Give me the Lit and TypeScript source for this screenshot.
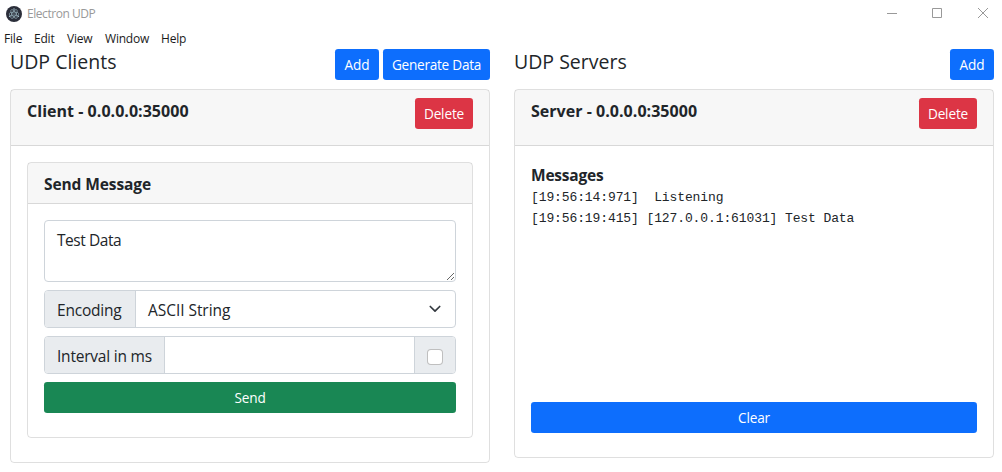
import { LitElement, html, css } from "lit";
import { customElement } from "lit/decorators.js";

@customElement("app-root")
export class AppRoot extends LitElement {
  static styles = css`
    :host {
      display: block;
      height: 472px;
      overflow: hidden;
      background: #fff;
      color: #212529;
      font: 400 15.5px/24px "Open Sans", "Noto Sans", sans-serif;
    }
    * { box-sizing: border-box; }
    span, button, h5, strong { white-space: pre; }
    .titlebar {
      display: flex;
      align-items: center;
      height: 27px;
      padding-left: 6px;
      font-size: 12px;
      line-height: 16px;
      color: #999;
    }
    .logo { width: 16px; height: 16px; margin-right: 5px; }
    .apptitle { flex: 1; letter-spacing: -0.45px; }
    .controls { display: block; width: 138px; height: 27px; }
    .menu {
      display: flex;
      height: 22px;
      padding: 4px 0 0 4px;
      font-size: 12px;
      line-height: 16px;
      color: #1a1a1a;
    }
    .menu span { letter-spacing: -0.2px; }
    .m-file { width: 30px; }
    .m-edit { width: 33px; }
    .m-view { width: 38px; }
    .m-window { width: 56px; }
    .columns {
      display: grid;
      grid-template-columns: 480px 480px;
      column-gap: 24px;
      align-items: start;
      padding-left: 10px;
    }
    .head { display: flex; height: 40px; gap: 4px; }
    h5 {
      flex: 1;
      margin: 0;
      padding-top: 1px;
      font-size: 19.5px;
      font-weight: 400;
      line-height: 24px;
      letter-spacing: 0;
    }
    .btn {
      display: block;
      height: 31px;
      padding: 0 0 1px;
      border: 0;
      border-radius: 3.2px;
      font: 400 13.6px/21px "Open Sans", "Noto Sans", sans-serif;
      letter-spacing: -0.15px;
      color: #fff;
      text-align: center;
    }
    .primary { background: #0d6efd; }
    .danger { background: #dc3545; }
    .success { background: #198754; }
    .add { width: 44px; }
    .generate { width: 107px; letter-spacing: -0.25px; }
    .delete { width: 58px; }
    .block { width: 100%; }
    .card {
      display: flex;
      flex-direction: column;
      border: 1px solid rgba(0, 0, 0, 0.125);
      border-radius: 4px;
    }
    .client { height: 374px; }
    .server { height: 369px; }
    .inner { height: 276px; }
    .card-head {
      display: flex;
      justify-content: space-between;
      height: 56px;
      padding: 8px 16px;
      background: rgba(0, 0, 0, 0.03);
      border-bottom: 1px solid rgba(0, 0, 0, 0.125);
    }
    .inner .card-head { height: 41px; }
    strong {
      margin-bottom: -2px;
      font-size: 15.5px;
      font-weight: 700;
      line-height: 26px;
      letter-spacing: -0.1px;
    }
    .address { font-size: 16px; letter-spacing: 0.03px; }
    .messages { letter-spacing: -0.22px; }
    .body { display: flex; flex-direction: column; flex: 1; padding: 16px; }
    .form { gap: 8px; }
    textarea {
      display: block;
      width: 100%;
      height: 62px;
      margin: 0;
      padding: 7px 12px 5px;
      border: 1px solid #ced4da;
      border-radius: 4px;
      background: #fff;
      color: #212529;
      font: inherit;
      letter-spacing: -0.45px;
      resize: vertical;
      outline: none;
    }
    .group {
      display: flex;
      height: 38px;
      border: 1px solid #ced4da;
      border-radius: 4px;
      overflow: hidden;
      letter-spacing: -0.22px;
    }
    .label { padding: 7px 0 0 12px; background: #e9ecef; border-right: 1px solid #ced4da; }
    .l-encoding { width: 91px; }
    .l-interval { width: 120px; }
    .select { display: flex; flex: 1; justify-content: space-between; padding: 7px 12px 5px; letter-spacing: -0.05px; }
    .chevron { width: 16px; height: 12px; margin-top: 5px; }
    .field { flex: 1; }
    .check { display: flex; width: 41px; padding: 12px 0 0 12px; background: #e9ecef; border-left: 1px solid #ced4da; }
    .box { width: 16px; height: 16px; border: 1px solid rgba(0, 0, 0, 0.25); border-radius: 4px; background: #fff; }
    .log {
      flex: 1;
      padding-top: 1px;
      font: 13px/21px "Liberation Mono", monospace;
      letter-spacing: -0.105px;
      white-space: pre;
    }
    .server .body { padding-bottom: 24px; }
  `;

  render() {
    return html`
      <div class="titlebar">
        <svg class="logo" viewBox="0 0 16 16">
          <circle cx="8" cy="8" r="8" fill="#2b2e3a"></circle>
          <g fill="none" stroke="#b4d3de" stroke-width="0.6" opacity="0.85">
            <ellipse cx="8" cy="8" rx="5" ry="2"></ellipse>
            <ellipse cx="8" cy="8" rx="5" ry="2" transform="rotate(60 8 8)"></ellipse>
            <ellipse cx="8" cy="8" rx="5" ry="2" transform="rotate(120 8 8)"></ellipse>
          </g>
          <g fill="#b4d3de">
            <circle cx="8" cy="8" r="0.6"></circle>
            <circle cx="3.6" cy="10.3" r="0.7"></circle>
            <circle cx="12.4" cy="10.3" r="0.7"></circle>
            <circle cx="8" cy="3" r="0.7"></circle>
          </g>
        </svg>
        <span class="apptitle">Electron UDP</span>
        <svg class="controls" viewBox="0 0 138 27" fill="none" stroke="#999">
          <path d="M23 13.5h10M68.500 8.500h9v9h-9z"></path>
          <path d="M114 8l10 10M124 8l-10 10"></path>
        </svg>
      </div>
      <div class="menu">
        <span class="m-file">File</span><span class="m-edit">Edit</span><span class="m-view">View</span><span class="m-window">Window</span><span>Help</span>
      </div>
      <div class="columns">
        <section>
          <div class="head">
            <h5>UDP Clients</h5>
            <button class="btn primary add">Add</button>
            <button class="btn primary generate">Generate Data</button>
          </div>
          <div class="card client">
            <div class="card-head">
              <strong class="address">Client - 0.0.0.0:35000</strong>
              <button class="btn danger delete">Delete</button>
            </div>
            <div class="body">
              <div class="card inner">
                <div class="card-head"><strong>Send Message</strong></div>
                <div class="body form">
                  <textarea .value=${"Test Data"} spellcheck="false"></textarea>
                  <div class="group">
                    <span class="label l-encoding">Encoding</span>
                    <div class="select">
                      <span>ASCII String</span>
                      <svg class="chevron" viewBox="0 0 16 12" fill="none" stroke="#343a40" stroke-width="1.7" stroke-linecap="round" stroke-linejoin="round">
                        <path d="M3.300 3.500l4.700 4.700 4.700-4.700"></path>
                      </svg>
                    </div>
                  </div>
                  <div class="group">
                    <span class="label l-interval">Interval in ms</span>
                    <div class="field"></div>
                    <div class="check"><div class="box"></div></div>
                  </div>
                  <button class="btn success block">Send</button>
                </div>
              </div>
            </div>
          </div>
        </section>
        <section>
          <div class="head">
            <h5>UDP Servers</h5>
            <button class="btn primary add">Add</button>
          </div>
          <div class="card server">
            <div class="card-head">
              <strong class="address">Server - 0.0.0.0:35000</strong>
              <button class="btn danger delete">Delete</button>
            </div>
            <div class="body">
              <strong class="messages">Messages</strong>
              <div class="log">${"[19:56:14:971]  Listening\n[19:56:19:415] [127.0.0.1:61031] Test Data"}</div>
              <button class="btn primary block">Clear</button>
            </div>
          </div>
        </section>
      </div>
    `;
  }
}
